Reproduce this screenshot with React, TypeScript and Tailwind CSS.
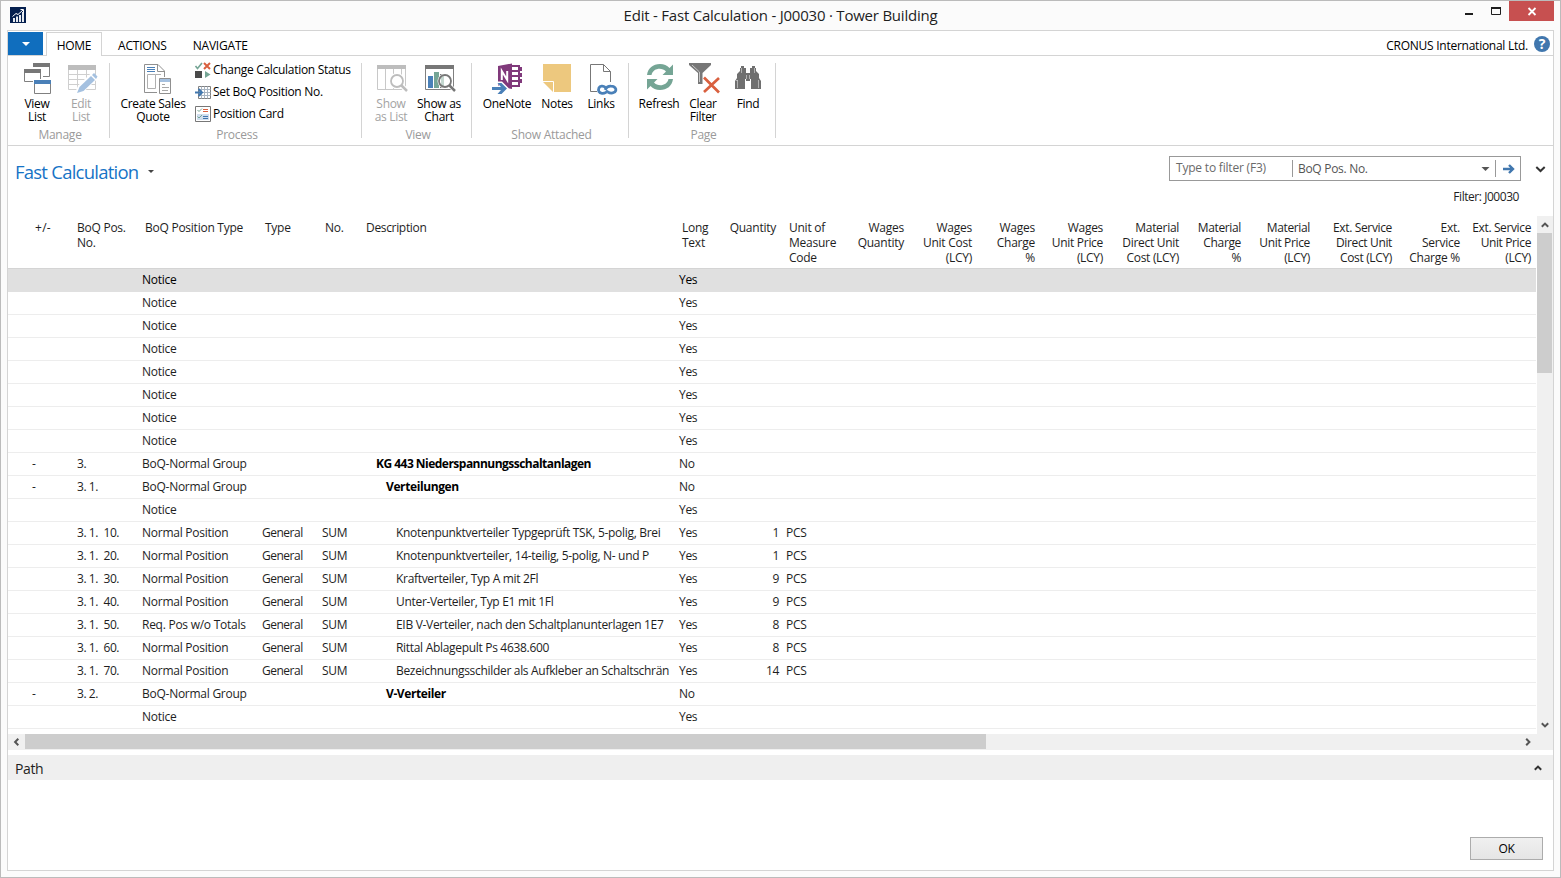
import React from "react";

type Row = {
  toggle?: string;
  pos?: string;
  kind: string;
  general?: boolean;
  desc?: string;
  level?: 1 | 2 | 3;
  long: string;
  qty?: string;
};

const notice: Row = { kind: "Notice", long: "Yes" };

const rows: Row[] = [
  ...Array.from({ length: 8 }, () => notice),
  { toggle: "-", pos: "3.", kind: "BoQ-Normal Group", desc: "KG 443 Niederspannungsschaltanlagen", level: 1, long: "No" },
  { toggle: "-", pos: "3. 1.", kind: "BoQ-Normal Group", desc: "Verteilungen", level: 2, long: "No" },
  notice,
  { pos: "3. 1.  10.", kind: "Normal Position", general: true, desc: "Knotenpunktverteiler Typgeprüft TSK, 5-polig, Brei", level: 3, long: "Yes", qty: "1" },
  { pos: "3. 1.  20.", kind: "Normal Position", general: true, desc: "Knotenpunktverteiler, 14-teilig, 5-polig, N- und P", level: 3, long: "Yes", qty: "1" },
  { pos: "3. 1.  30.", kind: "Normal Position", general: true, desc: "Kraftverteiler, Typ A mit 2Fl", level: 3, long: "Yes", qty: "9" },
  { pos: "3. 1.  40.", kind: "Normal Position", general: true, desc: "Unter-Verteiler, Typ E1 mit 1Fl", level: 3, long: "Yes", qty: "9" },
  { pos: "3. 1.  50.", kind: "Req. Pos w/o Totals", general: true, desc: "EIB V-Verteiler, nach den Schaltplanunterlagen 1E7", level: 3, long: "Yes", qty: "8" },
  { pos: "3. 1.  60.", kind: "Normal Position", general: true, desc: "Rittal Ablagepult Ps 4638.600", level: 3, long: "Yes", qty: "8" },
  { pos: "3. 1.  70.", kind: "Normal Position", general: true, desc: "Bezeichnungsschilder als Aufkleber an Schaltschrän", level: 3, long: "Yes", qty: "14" },
  { toggle: "-", pos: "3. 2.", kind: "BoQ-Normal Group", desc: "V-Verteiler", level: 2, long: "No" },
  notice,
];

const indent = {
  1: "pl-[10px] font-bold text-black tracking-[-0.52px]",
  2: "pl-5 font-bold text-black tracking-[-0.4px]",
  3: "pl-[30px] tracking-[-0.31px]",
};

const gridCols =
  "grid grid-cols-[69px_65px_120px_60px_44px_313px_43px_57px_73px_55px_68px_63px_68px_76px_62px_69px_82px_68px_71px_2px]";

const headers: { lines: string[]; cls: string }[] = [
  { lines: ["+/-"], cls: "pl-[27px] tracking-[0.3px]" },
  { lines: ["BoQ Pos.", "No."], cls: "" },
  { lines: ["BoQ Position Type"], cls: "pl-[3px]" },
  { lines: ["Type"], cls: "pl-[3px]" },
  { lines: ["No."], cls: "pl-[3px]" },
  { lines: ["Description"], cls: "tracking-[-0.33px]" },
  { lines: ["Long", "Text"], cls: "pl-[3px]" },
  { lines: ["Quantity"], cls: "pr-[3px] text-right" },
  { lines: ["Unit of", "Measure", "Code"], cls: "pl-[10px]" },
  { lines: ["Wages", "Quantity"], cls: "pr-[3px] text-right" },
  { lines: ["Wages", "Unit Cost", "(LCY)"], cls: "pr-[3px] text-right" },
  { lines: ["Wages", "Charge", "%"], cls: "pr-[3px] text-right" },
  { lines: ["Wages", "Unit Price", "(LCY)"], cls: "pr-[3px] text-right tracking-[-0.3px]" },
  { lines: ["Material", "Direct Unit", "Cost (LCY)"], cls: "pr-[3px] text-right tracking-[-0.3px]" },
  { lines: ["Material", "Charge", "%"], cls: "pr-[3px] text-right tracking-[-0.35px]" },
  { lines: ["Material", "Unit Price", "(LCY)"], cls: "pr-[3px] text-right tracking-[-0.35px]" },
  { lines: ["Ext. Service", "Direct Unit", "Cost (LCY)"], cls: "pr-[3px] text-right tracking-[-0.35px]" },
  { lines: ["Ext.", "Service", "Charge %"], cls: "pr-[3px] text-right" },
  { lines: ["Ext. Service", "Unit Price", "(LCY)"], cls: "pr-[3px] text-right tracking-[-0.38px]" },
];

function Icon({ size = 32, children }: { size?: number; children: React.ReactNode }) {
  return (
    <svg width={size} height={size} viewBox={`0 0 ${size} ${size}`} className="block shrink-0 overflow-visible" fill="none">
      {children}
    </svg>
  );
}

const ViewListIcon = () => (
  <Icon>
    <path d="M12.500 5V2.500H28.500V14.500H22" stroke="#808080" fill="#fff" />
    <path d="M12 1H29V5H12Z" fill="#777" />
    <path d="M2 6H21V21H2Z" fill="#fff" />
    <path d="M3.500 8.500H19.500V19.500H3.500Z" stroke="#808080" fill="#fff" />
    <path d="M3 7H20V11H3Z" fill="#777" />
    <path d="M12 17H31V32H12Z" fill="#fff" />
    <path d="M13.500 18.500H29.500V31.500H13.500Z" stroke="#808080" fill="#fff" />
    <path d="M13 18H30V22H13Z" fill="#4a80b8" />
  </Icon>
);

const EditListIcon = () => (
  <Icon>
    <path d="M3.500 3.500H30.500V27.500H3.500ZM3.500 12.500H30.500M3.500 17.500H30.500M3.500 22.500H30.500M12.500 7V27M21.500 7V27" stroke="#cfcfcf" />
    <path d="M3 3H31V8H3Z" fill="#bdbdbd" />
    <path d="M11 31L14 24L27 11.500L32 16L18 29Z" fill="#fff" stroke="#fff" strokeWidth="2" />
    <path d="M12 31L14.500 25L26 14L30 18L18.500 29Z" fill="#a5c1e0" />
    <path d="M27 13L29 11L32.500 14.500L31 17Z" fill="#a5c1e0" />
  </Icon>
);

const QuoteIcon = () => (
  <Icon>
    <path d="M7.500 2.500H21L27.500 9V15M7.500 2.500V30.500H20M20.500 3V9.500H27" stroke="#909090" />
    <path d="M10 5.500H18M10 7.500H18M10 9.500H18" stroke="#4a80b8" />
    <path d="M10.500 12.500H18.500V26.500H10.500ZM18.500 12.500H24" stroke="#b0b0b0" />
    <path d="M21 15H36V32H21Z" fill="#fff" />
    <path d="M22.500 16.500H33.500V31.500H22.500Z" stroke="#909090" />
    <path d="M23 17H33V20H23Z" fill="#a5c1e0" />
    <path d="M25 22.500H28M25 25.500H32M25 28.500H31" stroke="#a8a8a8" />
  </Icon>
);

const ShowListIcon = () => (
  <Icon>
    <path d="M2.500 3.500H30.500V27.500H2.500ZM10.500 7V27M18.500 7V27M26.500 7V27" stroke="#c8c8c8" />
    <path d="M2 3H31V7H2Z" fill="#bdbdbd" />
    <circle cx="22" cy="19" r="6" fill="#fff" stroke="#fff" strokeWidth="4" />
    <path d="M26 23L32 29" stroke="#fff" strokeWidth="5" />
    <circle cx="22" cy="19" r="6" fill="#fff" stroke="#bdbdbd" strokeWidth="1.800" />
    <path d="M26.500 23.500L32 29" stroke="#bdbdbd" strokeWidth="2.500" />
  </Icon>
);

const ShowChartIcon = () => (
  <Icon>
    <path d="M2.500 3.500H30.500V27.500H2.500Z" stroke="#808080" />
    <path d="M2 3H31V7H2Z" fill="#777" />
    <path d="M5 14H10V26H5Z" fill="#4a80b8" />
    <path d="M11 10H16V26H11Z" fill="#75a595" />
    <path d="M17 12H22V26H17Z" fill="#777" />
    <circle cx="22" cy="19" r="6" fill="#fff" stroke="#fff" strokeWidth="3" />
    <path d="M26 23L32 29" stroke="#fff" strokeWidth="4" />
    <path d="M18 15.500L21 13.700V24.300L18 23Z" fill="#c4d8d0" />
    <circle cx="22" cy="19" r="6" stroke="#777" strokeWidth="1.800" />
    <path d="M26.500 23.500L32 29" stroke="#777" strokeWidth="2.500" />
  </Icon>
);

const OneNoteIcon = () => (
  <Icon>
    <path d="M21 4H28V24H21M21 9H28M21 14H28M21 19H28" stroke="#80397b" strokeWidth="2" />
    <path d="M28 5H31V9H28ZM28 11H31V15H28ZM28 17H31V21H28Z" fill="#80397b" />
    <path d="M7 4L21 1.500V27L7 24.500Z" fill="#80397b" />
    <path d="M10.800 18V9L16.200 18V9" stroke="#fff" strokeWidth="2" />
    <path d="M0 23.500H8.500L5 19.500H11L18 26.500L12 33H4.500L8 29.500H0Z" fill="#fff" />
    <path d="M1 25H10L6.500 21H10.500L16 26.500L10.500 32H6.500L10 28H1Z" fill="#4a80b8" />
  </Icon>
);

const NotesIcon = () => (
  <Icon>
    <path d="M2 2H30V30H13L2 19Z" fill="#edc87e" />
    <path d="M2 19.500H12.500V30" stroke="#fff" />
    <path d="M2 20H12V30Z" fill="#edc87e" />
  </Icon>
);

const LinksIcon = () => (
  <Icon>
    <path d="M18.500 2.500H5.500V29.500H12M18.500 2.500L25.500 9.500V20M18.500 2.500V9.500H25.500" stroke="#777" />
    <g stroke="#4a80b8" strokeWidth="2.800">
      <path d="M20.500 25.300C18 23.400 15 23.800 13.900 26C12.800 28.500 14 31 17 31.300C20 31.600 21.500 30.500 23 28.500" />
      <path d="M20 27.800C21.500 25 23.500 24 26 24.200C30 24.400 31.300 26.500 30.800 28.500C30 31.200 26 31.800 22.800 30" />
    </g>
  </Icon>
);

const RefreshIcon = () => (
  <Icon>
    <g fill="#75a595">
      <path d="M4 13C5 6 10 2 17 2C21 2 24 3.500 26.500 6L30 2.500V13H19.500L23 9.500C19 5 10 6 8.500 13Z" />
      <path d="M30 17C29 24 24 28 17 28C13 28 10 26.500 7.500 24L4 27.500V17H14.500L11 20.500C15 25 24 24 25.500 17Z" />
    </g>
  </Icon>
);

const ClearFilterIcon = () => (
  <Icon>
    <path d="M2 1H24V3L15.500 11V22H11V11L2 3Z" fill="#777" />
    <path d="M5 3L12.500 10V20" stroke="#c8c8c8" />
    <path d="M18 15L33 31M33 15L18 31" stroke="#fff" strokeWidth="5" />
    <path d="M17 15.500L32 30.500M32 16L17 30" stroke="#d9603f" strokeWidth="2.700" />
  </Icon>
);

const FindIcon = () => (
  <Icon>
    <path
      d="M3 27V19L5 16V12L8 9V6H9V4H12V6H14V11H18V6H20V4H23V6H24V9L27 12V16L29 19V27H19V17H18V19H14V17H13V27Z"
      fill="#6f6f6f"
    />
    <path d="M4 18.500H6M5.500 18V26M26.500 18V26M9.500 6V11M22.500 6V11M14.500 13V17M17.500 13V17" stroke="#c4c4c4" strokeWidth="0.800" />
  </Icon>
);

function Chevron({ dir, color = "#555" }: { dir: "up" | "down" | "left" | "right"; color?: string }) {
  const d = {
    up: "M0.800 5.800L4 2.600L7.200 5.800",
    down: "M0.800 2.200L4 5.400L7.200 2.200",
    left: "M5.300 0.800L2.100 4L5.300 7.200",
    right: "M2.200 0.800L5.400 4L2.200 7.200",
  }[dir];
  return (
    <Icon size={8}>
      <path d={d} stroke={color} strokeWidth="2" />
    </Icon>
  );
}

function RibbonButton({ icon, lines, width, disabled }: { icon: React.ReactNode; lines: string[]; width: string; disabled?: boolean }) {
  return (
    <button className={`flex shrink-0 flex-col items-center ${width} ${disabled ? "text-[#a3a3a3]" : "text-black"}`}>
      {icon}
      <span className="mt-[3px] text-center leading-[13px] whitespace-pre">{lines.join("\n")}</span>
    </button>
  );
}

function Group({ label, width, pad, children }: { label: string; width: string; pad: string; children: React.ReactNode }) {
  return (
    <section className={`flex h-[75px] flex-col border-r border-[#d4d4d4] ${width}`}>
      <div className={`-mt-px flex h-[65px] shrink-0 items-start ${pad}`}>{children}</div>
      <div className="shrink-0 pl-[3px] text-center leading-[16px] tracking-[-0.25px] text-[#9a9a9a]">{label}</div>
    </section>
  );
}

function SmallCommand({ icon, label }: { icon: React.ReactNode; label: string }) {
  return (
    <button className="flex h-[22px] items-start whitespace-nowrap text-black">
      {icon}
      <span className="ml-0.5 leading-4">{label}</span>
    </button>
  );
}

export default function App() {
  return (
    <div className="flex h-[878px] w-[1561px] flex-col overflow-hidden border border-[#bbbbbb] bg-[#fbfbfb] pr-1.5 pb-1.5 pl-1.5 font-['Open_Sans','Noto_Sans',sans-serif] text-[12px] tracking-[-0.3px] text-[#1e1e1e]">
      <header className="flex h-[29px] shrink-0">
        <div className="w-[200px] pt-[6px] pl-[3px]">
          <Icon size={16}>
            <path d="M0 0H16V16H0Z" fill="#05204f" />
            <path d="M3 11H5V15H3ZM6 9.500H8V15H6ZM9 8H11V15H9ZM12 5H14V15H12Z" fill="#e6eaf0" />
            <path d="M2.500 9.500L6 6.500L8 7.500L13 3M10.500 2.500H13.500V5.500" stroke="#fff" />
          </Icon>
        </div>
        <h1 className="flex-1 pt-1 text-center text-[15px] leading-[21px] tracking-[-0.22px]">
          Edit - Fast Calculation - J00030 · Tower Building
        </h1>
        <div className="flex w-[200px] justify-end">
          <Icon size={20}>
            <path d="M0 12H8V14H0Z" fill="#1e1e1e" />
          </Icon>
          <span className="ml-[6px]">
            <Icon size={18}>
              <path d="M0.500 7.500H9.500V13.500H0.500Z" stroke="#1e1e1e" />
              <path d="M0 6H10V8H0Z" fill="#1e1e1e" />
            </Icon>
          </span>
          <button className="flex h-5 w-[45px] items-center justify-center bg-[#c75050]">
            <Icon size={8}>
              <path d="M0.500 1L7.500 8M7.500 1L0.500 8" stroke="#fff" strokeWidth="1.800" />
            </Icon>
          </button>
        </div>
      </header>

      <main className="flex h-[841px] flex-col border border-[#d4d4d4] bg-white">
        <nav className="flex h-[25px] shrink-0 border-b border-[#d4d4d4]">
          <button className="mt-px flex h-[23px] w-[35px] items-center justify-center bg-[#106ebe]">
            <Icon size={8}>
              <path d="M0 2H8L4 6Z" fill="#fff" />
            </Icon>
          </button>
          <div className="mt-px ml-[3px] flex h-6 w-[56px] justify-center border border-b-0 border-[#d4d4d4] bg-white pt-[3px] leading-[20px] text-black">
            HOME
          </div>
          <div className="ml-4 pt-[5px] leading-[20px] tracking-[-0.2px] text-black">ACTIONS</div>
          <div className="ml-[26px] pt-[5px] leading-[20px] tracking-[-0.2px] text-black">NAVIGATE</div>
          <div className="ml-auto pt-[5px] leading-[20px] tracking-[-0.26px] text-black">CRONUS International Ltd.</div>
          <div className="mt-[5px] mr-[3px] ml-1.5 flex size-4 items-center justify-center rounded-full bg-[#4177ae] text-[14px] leading-4 font-bold tracking-normal text-white">
            ?
          </div>
        </nav>

        <div className="flex h-[90px] shrink-0 border-b border-[#d4d4d4] pt-[7px]">
          <Group label="Manage" width="w-[102px]" pad="pl-[7px]">
            <RibbonButton icon={<ViewListIcon />} lines={["View", "List"]} width="w-11" />
            <RibbonButton icon={<EditListIcon />} lines={["Edit", "List"]} width="w-11" disabled />
          </Group>
          <Group label="Process" width="w-[252px]" pad="pl-[5px]">
            <RibbonButton icon={<QuoteIcon />} lines={["Create Sales", "Quote"]} width="w-[76px]" />
            <div className="ml-1 flex flex-col">
              <SmallCommand
                label="Change Calculation Status"
                icon={
                  <Icon size={16}>
                    <path d="M0.500 4L2.500 6.500L7 1" stroke="#75a595" strokeWidth="1.600" />
                    <path d="M9 1L15 7M15 1L9 7" stroke="#d9603f" strokeWidth="2" />
                    <path d="M0 9H7V16H0Z" fill="#4a4a4a" />
                    <path d="M10 9L15.500 12.500L10 16Z" fill="#75a595" />
                  </Icon>
                }
              />
              <SmallCommand
                label="Set BoQ Position No."
                icon={
                  <Icon size={16}>
                    <path d="M3.500 2.500H15.500V14.500H3.500Z" fill="#fff" stroke="#808080" />
                    <path d="M3.500 5.500H15.500M3.500 8.500H15.500M3.500 11.500H15.500M6.500 2.500V14.500M9.500 2.500V14.500M12.500 2.500V14.500" stroke="#a9b5c2" />
                    <path d="M0 8.500H6M3.500 5L7 8.500L3.500 12" stroke="#4177ae" strokeWidth="2" />
                  </Icon>
                }
              />
              <SmallCommand
                label="Position Card"
                icon={
                  <Icon size={16}>
                    <path d="M0.500 0.500H15.500V15.500H0.500Z" stroke="#777" />
                    <path d="M2 8H14V14H2Z" fill="#cfdeee" />
                    <path d="M2.500 4L4 5.500L7 2.500M2.500 10.500L4 12L7 9" stroke="#75a595" />
                    <path d="M8 3.500H13M8 5.500H13" stroke="#d9603f" />
                    <path d="M8 10.500H13M8 12.500H13" stroke="#4177ae" />
                  </Icon>
                }
              />
            </div>
          </Group>
          <Group label="View" width="w-[110px]" pad="pl-[7px]">
            <RibbonButton icon={<ShowListIcon />} lines={["Show", "as List"]} width="w-11" disabled />
            <RibbonButton icon={<ShowChartIcon />} lines={["Show as", "Chart"]} width="w-[52px]" />
          </Group>
          <Group label="Show Attached" width="w-[157px]" pad="pl-[10px]">
            <RibbonButton icon={<OneNoteIcon />} lines={["OneNote"]} width="w-[50px]" />
            <RibbonButton icon={<NotesIcon />} lines={["Notes"]} width="w-[50px]" />
            <RibbonButton icon={<LinksIcon />} lines={["Links"]} width="w-[38px]" />
          </Group>
          <Group label="Page" width="w-[147px]" pad="pl-2">
            <RibbonButton icon={<RefreshIcon />} lines={["Refresh"]} width="w-11" />
            <RibbonButton icon={<ClearFilterIcon />} lines={["Clear", "Filter"]} width="w-11" />
            <RibbonButton icon={<FindIcon />} lines={["Find"]} width="w-[46px]" />
          </Group>
        </div>

        <div className="flex h-[70px] shrink-0 justify-between pl-[7px]">
          <div className="flex h-[26px] items-center pt-[25px] text-[18.5px] tracking-[-0.76px] text-[#1673c6]">
            <span className="leading-[26px]">Fast Calculation</span>
            <span className="ml-[9px]">
              <Icon size={8}>
                <path d="M1 2H7L4 5Z" fill="#444" />
              </Icon>
            </span>
          </div>
          <div className="pt-[10px] pr-[7px]">
            <div className="flex items-center">
              <div className="flex h-[25px] w-[352px] items-center border border-[#999] text-[#6a6a6a]">
                <span className="w-[122px] pl-1.5 pb-px tracking-[-0.2px]">Type to filter (F3)</span>
                <span className="h-[17px] w-px bg-[#999]" />
                <span className="flex-1 pl-[5px] text-[#555]">BoQ Pos. No.</span>
                <Icon size={8}>
                  <path d="M0.500 2H8.500L4.500 6Z" fill="#555" />
                </Icon>
                <span className="ml-1.5 h-[17px] w-px bg-[#999]" />
                <span className="mr-[5px] ml-[7px]">
                  <Icon size={12}>
                    <path d="M0 6H10M6 2L10 6L6 10" stroke="#4177ae" strokeWidth="2.400" />
                  </Icon>
                </span>
              </div>
              <span className="ml-[15px]">
                <Icon size={10}>
                  <path d="M0.300 3L4.500 7L8.700 3" stroke="#333" strokeWidth="2" />
                </Icon>
              </span>
            </div>
            <div className="mt-[7px] pr-[27px] text-right leading-[18px] tracking-[-0.45px]">Filter: J00030</div>
          </div>
        </div>

        <div className="flex h-[518px] shrink-0">
          <div className="w-[1528px]">
            <div className={`${gridCols} h-[53px] border-b border-[#d4d4d4] pt-1 leading-[15px] tracking-[-0.25px] whitespace-nowrap`}>
              {headers.map((h, i) => (
                <div key={i} className={`flex flex-col ${h.cls}`}>
                  {h.lines.map((l) => (
                    <span key={l}>{l}</span>
                  ))}
                </div>
              ))}
            </div>
            {rows.map((r, i) => (
              <div
                key={i}
                className={`${gridCols} h-[23px] border-b leading-[21px] whitespace-nowrap ${
                  i === 0 ? "border-[#e0e0e0] bg-[#e0e0e0] text-black" : "border-[#ededed]"
                }`}
              >
                <span className="pl-6">{r.toggle}</span>
                <span className="tracking-[-0.42px] whitespace-pre">{r.pos}</span>
                <span className="tracking-[-0.26px]">{r.kind}</span>
                <span className="tracking-[-0.5px]">{r.general ? "General" : ""}</span>
                <span>{r.general ? "SUM" : ""}</span>
                <span className={r.level ? indent[r.level] : ""}>{r.desc}</span>
                <span>{r.long}</span>
                <span className="text-right">{r.qty}</span>
                <span className="pl-[7px]">{r.qty ? "PCS" : ""}</span>
              </div>
            ))}
          </div>
          <div className="ml-px flex w-4 flex-col items-center bg-[#f0f0f0]">
            <div className="flex h-[17px] shrink-0 items-center pr-px">
              <Chevron dir="up" />
            </div>
            <div className="h-[140px] w-[15px] shrink-0 self-start bg-[#cdcdcd]" />
            <div className="mt-auto flex h-[19px] shrink-0 items-center pr-px">
              <Chevron dir="down" />
            </div>
          </div>
        </div>

        <div className="flex h-4 shrink-0 items-center bg-[#f0f0f0]">
          <div className="flex w-[17px] justify-center">
            <Chevron dir="left" />
          </div>
          <div className="h-[15px] w-[961px] self-start bg-[#cdcdcd]" />
          <div className="mr-[21px] ml-auto">
            <Chevron dir="right" />
          </div>
        </div>

        <div className="mt-[5px] flex h-[25px] shrink-0 items-center justify-between bg-[#efefef] pr-[11px] pl-[7px]">
          <span className="pt-0.5 text-[14px] tracking-[-0.4px]">Path</span>
          <Chevron dir="up" color="#333" />
        </div>

        <div className="flex flex-1 items-end justify-end pr-[10px] pb-[10px]">
          <button className="flex h-[23px] w-[73px] items-center justify-center border border-[#acacac] bg-linear-to-b from-[#f0f0f0] to-[#e5e5e5] text-black">
            OK
          </button>
        </div>
      </main>
    </div>
  );
}
